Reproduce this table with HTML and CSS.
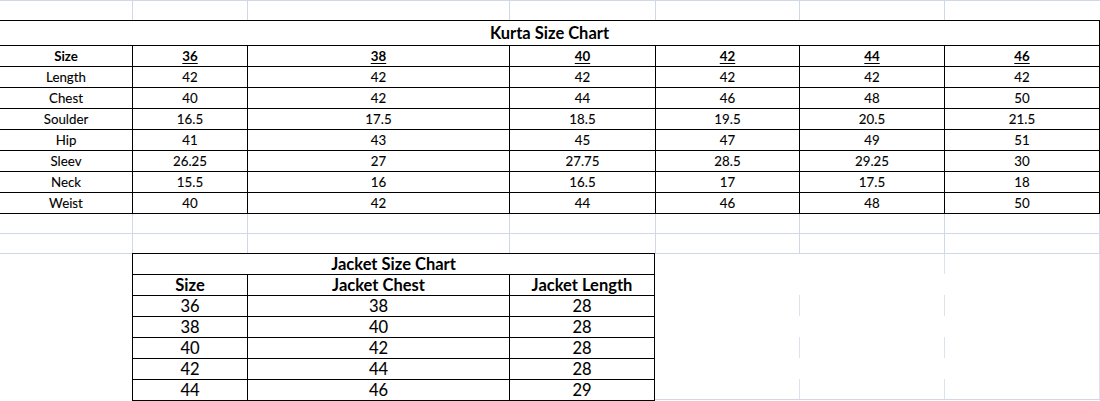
FILE: index.html
```html
<!DOCTYPE html>
<html>
<head>
<meta charset="utf-8">
<link rel="stylesheet" href="styles.css">
</head>
<body>
<div class="sheet">
  <div class="row7 top">
    <div class="gc"></div><div class="gc"></div><div class="gc"></div><div class="gc"></div><div class="gc"></div><div class="gc"></div><div class="gc last"></div>
  </div>

  <div class="kurta">
    <div class="k-title">Kurta Size Chart</div>
    <div class="row7 k-row head">
      <div class="c">Size</div><div class="c"><u>36</u></div><div class="c"><u>38</u></div><div class="c"><u>40</u></div><div class="c"><u>42</u></div><div class="c"><u>44</u></div><div class="c"><u>46</u></div>
    </div>
    <div class="row7 k-row">
      <div class="c">Length</div><div class="c">42</div><div class="c">42</div><div class="c">42</div><div class="c">42</div><div class="c">42</div><div class="c">42</div>
    </div>
    <div class="row7 k-row">
      <div class="c">Chest</div><div class="c">40</div><div class="c">42</div><div class="c">44</div><div class="c">46</div><div class="c">48</div><div class="c">50</div>
    </div>
    <div class="row7 k-row">
      <div class="c">Soulder</div><div class="c">16.5</div><div class="c">17.5</div><div class="c">18.5</div><div class="c">19.5</div><div class="c">20.5</div><div class="c">21.5</div>
    </div>
    <div class="row7 k-row">
      <div class="c">Hip</div><div class="c">41</div><div class="c">43</div><div class="c">45</div><div class="c">47</div><div class="c">49</div><div class="c">51</div>
    </div>
    <div class="row7 k-row">
      <div class="c">Sleev</div><div class="c">26.25</div><div class="c">27</div><div class="c">27.75</div><div class="c">28.5</div><div class="c">29.25</div><div class="c">30</div>
    </div>
    <div class="row7 k-row">
      <div class="c">Neck</div><div class="c">15.5</div><div class="c">16</div><div class="c">16.5</div><div class="c">17</div><div class="c">17.5</div><div class="c">18</div>
    </div>
    <div class="row7 k-row">
      <div class="c">Weist</div><div class="c">40</div><div class="c">42</div><div class="c">44</div><div class="c">46</div><div class="c">48</div><div class="c">50</div>
    </div>
  </div>

  <div class="row7 gap gap1">
    <div class="gc"></div><div class="gc"></div><div class="gc"></div><div class="gc"></div><div class="gc"></div><div class="gc"></div><div class="gc"></div>
  </div>
  <div class="row7 gap gap2">
    <div class="gc"></div><div class="gc"></div><div class="gc"></div><div class="gc"></div><div class="gc"></div><div class="gc"></div><div class="gc"></div>
  </div>

  <div class="lower">
    <div class="lower-left"></div>

    <div class="jacket">
      <div class="j-title">Jacket Size Chart</div>
      <div class="row3 j-row head">
        <div class="c">Size</div><div class="c">Jacket Chest</div><div class="c">Jacket Length</div>
      </div>
      <div class="row3 j-row"><div class="c">36</div><div class="c">38</div><div class="c">28</div></div>
      <div class="row3 j-row"><div class="c">38</div><div class="c">40</div><div class="c">28</div></div>
      <div class="row3 j-row"><div class="c">40</div><div class="c">42</div><div class="c">28</div></div>
      <div class="row3 j-row"><div class="c">42</div><div class="c">44</div><div class="c">28</div></div>
      <div class="row3 j-row"><div class="c">44</div><div class="c">46</div><div class="c">29</div></div>
    </div>

    <div class="lower-right">
      <div class="r-row on-b"><div class="gc"></div><div class="gc v"></div><div class="gc v"></div></div>
      <div class="r-row"><div class="gc"></div><div class="gc"></div><div class="gc v"></div></div>
      <div class="r-row"><div class="gc v"></div><div class="gc v"></div><div class="gc v"></div></div>
      <div class="r-row"><div class="gc"></div><div class="gc"></div><div class="gc v"></div></div>
      <div class="r-row"><div class="gc v"></div><div class="gc v"></div><div class="gc v"></div></div>
      <div class="r-row"><div class="gc"></div><div class="gc"></div><div class="gc v"></div></div>
      <div class="r-row bottom"><div class="gc v"></div><div class="gc v"></div><div class="gc v"></div></div>
    </div>
  </div>
</div>
</body>
</html>
```

FILE: styles.css
```css
* { box-sizing: border-box; }

html, body {
  margin: 0;
  padding: 0;
  background: #ffffff;
}

body {
  font-family: Lato, "Open Sans", sans-serif;
  color: #000000;
  width: 1100px;
  height: 401px;
  overflow: hidden;
}

.sheet {
  width: 1100px;
}

.row7 {
  display: grid;
  grid-template-columns: 133px 115px 262px 146px 144px 145px 155px;
}

.row3 {
  display: grid;
  grid-template-columns: 115px 262px 145px;
}

/* light grid cells */
.gc {
  border-right: 1px solid #d0d7e5;
}

.top {
  height: 20px;
  border-top: 1px solid #d0d7e5;
}

.top .last {
  border-right-color: transparent;
}

/* kurta chart */
.kurta {
  border-top: 1px solid #000;
}

.k-title {
  height: 25px;
  border-right: 1px solid #000;
  border-bottom: 1px solid #000;
  text-align: center;
  font-weight: 700;
  font-size: 16.5px;
  line-height: 24px;
}

.k-row {
  height: 21px;
}

.k-row .c {
  border-right: 1px solid #000;
  border-bottom: 1px solid #000;
  text-align: center;
  font-size: 13.3px;
  line-height: 20px;
  white-space: nowrap;
  -webkit-text-stroke: 0.1px #000;
}

.k-row.head .c {
  font-weight: 700;
  -webkit-text-stroke: 0;
}

.k-row.head u {
  text-decoration: underline;
  text-decoration-thickness: 1px;
  text-underline-offset: 2px;
}

/* gap rows */
.gap1 {
  height: 20px;
  border-bottom: 1px solid #d0d7e5;
}

.gap2 {
  height: 19px;
}

/* lower section */
.lower {
  display: flex;
  height: 148px;
}

.lower-left {
  width: 132px;
  border-top: 1px solid #d0d7e5;
}

.jacket {
  width: 523px;
  border-top: 1px solid #000;
  border-left: 1px solid #000;
}

.j-title {
  height: 21px;
  border-right: 1px solid #000;
  border-bottom: 1px solid #000;
  text-align: center;
  font-weight: 700;
  font-size: 16.5px;
  line-height: 20px;
}

.j-row {
  height: 21px;
}

.j-row .c {
  border-right: 1px solid #000;
  border-bottom: 1px solid #000;
  text-align: center;
  font-size: 16.5px;
  line-height: 20px;
  white-space: nowrap;
  -webkit-text-stroke: 0.1px #000;
}

.j-row.head .c {
  font-weight: 700;
  -webkit-text-stroke: 0;
}

.lower-right {
  width: 445px;
  border-top: 1px solid #d0d7e5;
}

.r-row {
  display: grid;
  grid-template-columns: 145px 145px 155px;
  height: 21px;
}

.r-row.on-b {
  height: 20px;
}

.r-row .gc {
  border-right: 1px solid transparent;
}

.r-row .gc.v {
  border-right-color: #dde2eb;
}

.r-row.bottom {
  height: 21px;
  border-bottom: 1px solid #d0d7e5;
}
```
